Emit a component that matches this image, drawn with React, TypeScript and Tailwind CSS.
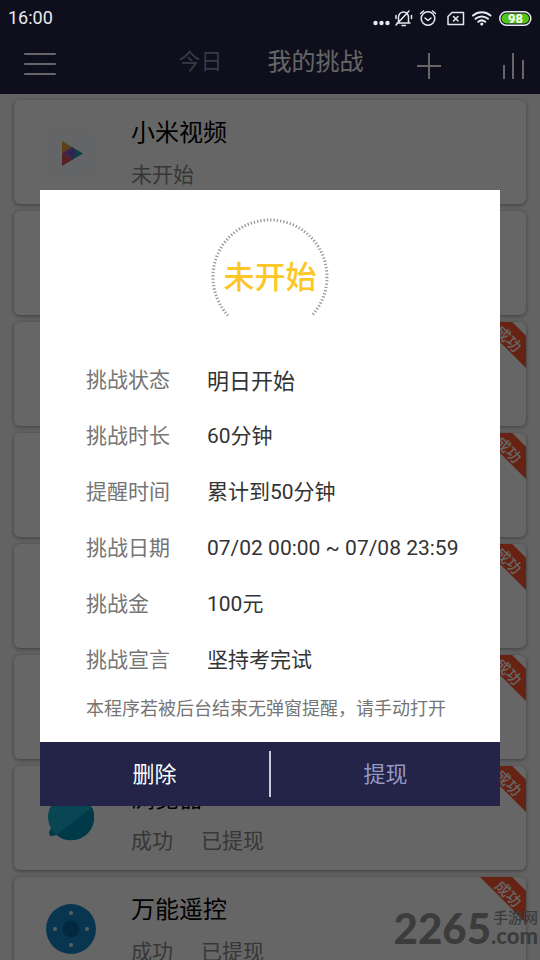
import type { ReactNode } from 'react'

interface Challenge {
  id: number
  name?: string
  tags?: string[]
  icon?: ReactNode
  done?: boolean
}

const VideoIcon = () => (
  <svg viewBox="0 0 46 46" className="h-[46px] w-[46px]">
    <rect x="2" y="3" width="43" height="42" fill="#fbfdff" stroke="#f0f7fa" />
    <path d="M14 12v12l10-6z" fill="#e6a23a" />
    <path d="M14 24v13l11-6.500z" fill="#d8505a" />
    <path d="M14 24l10-6 3 6-2 6.500z" fill="#a05ab8" />
    <path d="M24 18l11 6.500-11 6.500z" fill="#2a9ab4" />
    <path d="M24 18l4 6.500-4 6.500-4-7z" fill="#7a5cc0" />
  </svg>
)

const BrowserIcon = () => (
  <svg viewBox="0 0 46 46" className="h-[46px] w-[46px]">
    <path d="M3 33c-3 4-2 9 1 8 4-1 7-1 9-4z" fill="#0a94b6" />
    <circle cx="23" cy="22" r="23" fill="#12aecc" />
    <path d="M44 12.500A23 23 0 0 1 8.500 40z" fill="#008fb2" />
  </svg>
)

const RemoteIcon = () => (
  <svg viewBox="0 0 50 50" className="h-[50px] w-[50px]">
    <circle cx="25" cy="25" r="25" fill="#1488c8" />
    <circle cx="25" cy="25" r="8.500" fill="#0868a0" />
    <circle cx="25" cy="9" r="2" fill="#d8f0ff" />
    <circle cx="25" cy="41" r="2" fill="#d8f0ff" />
    <circle cx="9" cy="25" r="2" fill="#d8f0ff" />
    <circle cx="41" cy="25" r="2" fill="#d8f0ff" />
  </svg>
)

const CHALLENGES: Challenge[] = [
  { id: 1, name: '小米视频', tags: ['未开始'], icon: <VideoIcon /> },
  { id: 2 },
  { id: 3, done: true },
  { id: 4, done: true },
  { id: 5, done: true },
  { id: 6, done: true },
  { id: 7, name: '浏览器', tags: ['成功', '已提现'], icon: <BrowserIcon />, done: true },
  { id: 8, name: '万能遥控', tags: ['成功', '已提现'], icon: <RemoteIcon />, done: true },
]

const DETAILS = [
  { label: '挑战状态', value: '明日开始', big: true },
  { label: '挑战时长', value: '60分钟' },
  { label: '提醒时间', value: '累计到50分钟' },
  { label: '挑战日期', value: '07/02 00:00 ~ 07/08 23:59' },
  { label: '挑战金', value: '100元' },
  { label: '挑战宣言', value: '坚持考完试' },
]

function StatusBar() {
  return (
    <div className="relative z-20 flex h-9 items-center justify-between pl-2 pr-2 text-[#e8e8f0]">
      <span className="text-lg">16:00</span>
      <svg viewBox="0 0 164 24" className="h-6 w-[164px]" fill="none" stroke="currentColor" strokeWidth="1.500" strokeLinecap="round" strokeLinejoin="round">
        <g fill="currentColor" stroke="none">
          <circle cx="7.500" cy="17" r="2.200" />
          <circle cx="13.500" cy="17" r="2.200" />
          <circle cx="19.500" cy="17" r="2.200" />
        </g>
        {/* muted bell */}
        <path d="M29 17h13M30.500 16.500V11a5 5 0 0 1 10 0v5.500M34 19.500h3.500M28 19L41 5M28 9.500v3M43.500 9.500v3" />
        {/* alarm */}
        <circle cx="60" cy="12.500" r="6.800" />
        <path d="M57 12l3 2.500 3-2.500M52.500 7.500l3-2.500M67.500 7.500l-3-2.500" />
        {/* no sim */}
        <path d="M84 6.500h11.500v12h-15.500v-8zM85.500 10.500l4.500 4.500M90 10.500l-4.500 4.500" />
        {/* wifi */}
        <path d="M105 9.500a13.500 13.500 0 0 1 17.500 0M107.500 12.800a9.500 9.500 0 0 1 12.500 0M110.300 15.800a5.500 5.500 0 0 1 7 0" strokeWidth="2" />
        <circle cx="113.800" cy="18" r="1.600" fill="currentColor" stroke="none" />
        <rect x="131.800" y="5.800" width="31" height="13.500" rx="6.700" />
        <rect x="133.500" y="7.500" width="27.500" height="10" rx="5" fill="#52c41a" stroke="none" />
        <text x="147.500" y="17" textAnchor="middle" fontSize="13" fontWeight="700" fill="#fff" stroke="none">98</text>
      </svg>
    </div>
  )
}

function NavBar() {
  return (
    <nav className="flex h-[58px] items-start justify-between pl-6 text-white">
      <button type="button" aria-label="菜单" className="mt-[17px] flex w-8 flex-col gap-2">
        <span className="h-0.5 w-full rounded bg-current" />
        <span className="h-0.5 w-full rounded bg-current" />
        <span className="h-0.5 w-full rounded bg-current" />
      </button>
      <div className="ml-[70px] flex items-center gap-[45px] pt-2">
        <button type="button" className="text-[22px] leading-9 text-[#8c8eb4]">今日</button>
        <button type="button" className="text-2xl leading-9">我的挑战</button>
      </div>
      <div className="flex pt-[17px]">
        <button type="button" aria-label="添加">
          <svg viewBox="0 0 26 26" className="h-[26px] w-[26px]" stroke="currentColor" strokeWidth="2">
            <path d="M13 0v26M1 13h24" />
          </svg>
        </button>
        <button type="button" aria-label="统计" className="ml-[60px] mr-[14px]">
          <svg viewBox="0 0 24 26" className="h-[26px] w-6" stroke="currentColor" strokeWidth="2">
            <path d="M2 12v14M11 0v26M21 7v19" />
          </svg>
        </button>
      </div>
    </nav>
  )
}

function Ribbon() {
  return (
    <div className="absolute right-0 top-0 h-[46px] w-[46px] overflow-hidden bg-[#ff5630] [clip-path:polygon(0_0,70%_0,100%_30%,100%_100%)]">
      <span className="absolute left-[13px] top-[7px] rotate-45 whitespace-nowrap text-[15px] font-medium leading-5 text-white">成功</span>
    </div>
  )
}

function ChallengeCard({ item }: { item: Challenge }) {
  return (
    <li className="relative flex h-[104px] shrink-0 rounded-md bg-white shadow-[0_1px_4px_rgba(0,0,0,0.4)]">
      <div className="flex w-[117px] items-center justify-center pr-1">{item.icon}</div>
      <div className="pt-[15px]">
        <h2 className="text-2xl leading-9 text-black">{item.name}</h2>
        <p className="mt-2 flex gap-7 text-[21px] leading-8 text-[#8a8a8a]">
          {item.tags?.map((tag) => <span key={tag}>{tag}</span>)}
        </p>
      </div>
      {item.done && <Ribbon />}
    </li>
  )
}

function DetailDialog() {
  return (
    <div role="dialog" aria-modal="true" aria-label="挑战详情" className="w-full bg-white">
      <div className="relative flex h-[163px] justify-center pt-[27px]">
        <svg viewBox="0 0 120 120" className="h-[120px] w-[120px]" fill="none">
          <path d="M18.100 98.600a57 57 0 1 1 83.800 0" stroke="#9a9a9a" strokeWidth="3" strokeDasharray="1.300 2" />
        </svg>
        <p className="absolute inset-x-0 top-[66px] text-center text-[31px] font-medium leading-[44px] text-[#fcc724]">未开始</p>
      </div>
      <dl className="px-[46px]">
        {DETAILS.map((row) => (
          <div key={row.label} className="flex h-14 items-center whitespace-nowrap">
            <dt className="w-[121px] shrink-0 text-[21px] text-[#757575]">{row.label}</dt>
            <dd className={row.big ? 'text-[22px] text-[#333]' : 'text-[21px] text-[#333]'}>{row.value}</dd>
          </div>
        ))}
      </dl>
      <p className="whitespace-nowrap px-[46px] pb-[17px] pt-1 text-lg leading-8 text-[#757575]">本程序若被后台结束无弹窗提醒，请手动打开</p>
      <div className="flex h-16 items-center bg-[#232448] text-[22px]">
        <button type="button" className="h-full flex-1 text-white">删除</button>
        <span className="h-[46px] w-0.5 bg-[#c8c8d8]" />
        <button type="button" className="h-full flex-1 text-[#9499c4]">提现</button>
      </div>
    </div>
  )
}

export default function App() {
  return (
    <div className="relative flex h-screen flex-col overflow-hidden bg-[#f8f8f8] font-[Roboto,'Noto_Sans_CJK_SC',sans-serif]">
      <header className="shrink-0 bg-[#232448]">
        <StatusBar />
        <NavBar />
      </header>
      <ul className="flex flex-col gap-[7px] px-[14px] pt-[6px]">
        {CHALLENGES.map((item) => <ChallengeCard key={item.id} item={item} />)}
      </ul>

      <div className="absolute inset-0 z-10 flex items-center bg-black/60 px-10 pt-9">
        <DetailDialog />
      </div>

      {/* site mark */}
      <div className="absolute bottom-[14px] right-0.5 z-30 flex items-end text-[#3c3c3c]">
        <span className="font-[Lato] text-[42px] font-black leading-9">2265</span>
        <span className="flex flex-col">
          <span className="text-right text-[15px] font-medium leading-4">手游网</span>
          <span className="font-[Lato] text-[22px] font-black leading-5">.com</span>
        </span>
      </div>
    </div>
  )
}
